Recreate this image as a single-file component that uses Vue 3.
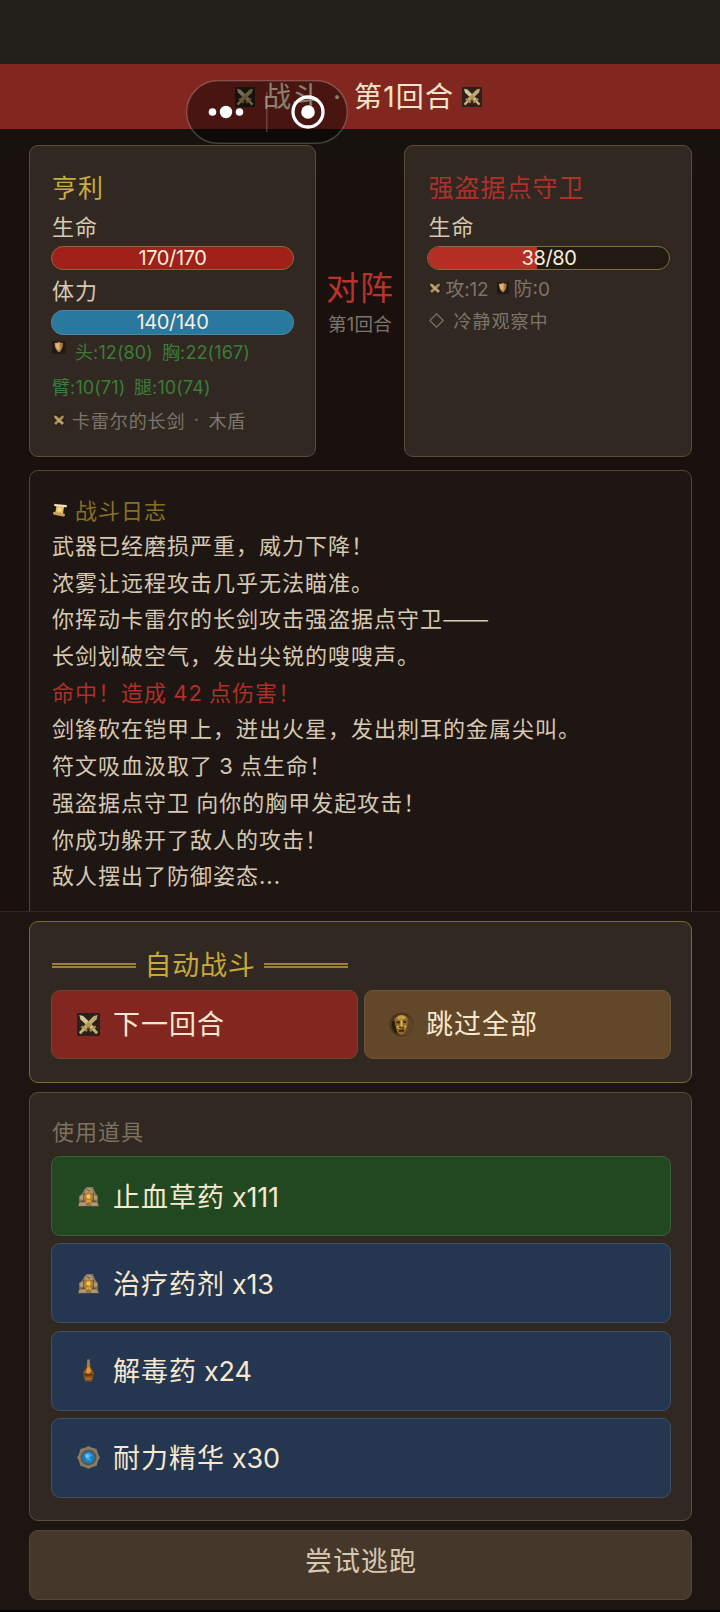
<script setup>
const logLines = [
  { text: '武器已经磨损严重，威力下降！' },
  { text: '浓雾让远程攻击几乎无法瞄准。' },
  { text: '你挥动卡雷尔的长剑攻击强盗据点守卫', dash: true },
  { text: '长剑划破空气，发出尖锐的嗖嗖声。' },
  { text: '命中！造成 42 点伤害！', hit: true },
  { text: '剑锋砍在铠甲上，迸出火星，发出刺耳的金属尖叫。' },
  { text: '符文吸血汲取了 3 点生命！' },
  { text: '强盗据点守卫 向你的胸甲发起攻击！' },
  { text: '你成功躲开了敌人的攻击！' },
  { text: '敌人摆出了防御姿态...' }
]
const items = [
  { name: '止血草药', count: 'x111', icon: 'i-relic', tone: 'green', num: 'narrow' },
  { name: '治疗药剂', count: 'x13', icon: 'i-relic', tone: 'blue', num: '' },
  { name: '解毒药', count: 'x24', icon: 'i-flask', tone: 'blue', num: '' },
  { name: '耐力精华', count: 'x30', icon: 'i-gem', tone: 'blue', num: '' }
]
</script>

<template>
  <div class="page">
    <svg class="defs" width="0" height="0">
      <symbol id="i-swords" viewBox="0 0 24 24">
        <rect width="24" height="24" rx="1" fill="#2b211a" />
        <path d="M2.500 2 L6.500 3 L18 14.500 L15 17.500 L3.500 6.500 Z" fill="#d6c397" />
        <path d="M21.500 2 L17.500 3 L6 14.500 L9 17.500 L20.500 6.500 Z" fill="#bda876" />
        <path d="M4.500 14 L10.500 19 M19.500 14 L13.500 19" stroke="#a88a4c" stroke-width="2.400" />
        <path d="M7.500 16.500 L3 21.200 M16.500 16.500 L21 21.200" stroke="#c9b07a" stroke-width="3" />
        <path d="M8 12.500 L12 9.500 L16 12.500 L12 16.500 Z" fill="#b29752" />
        <circle cx="12" cy="16" r="1.300" fill="#6e572d" />
      </symbol>
      <symbol id="i-swords-bare" viewBox="0 0 24 24">
        <rect width="24" height="24" rx="1" fill="#2b211a" fill-opacity=".7" />
        <path d="M2 3 L7 4 L22 18 L18 22 L3 8 Z" fill="#bfa06a" />
        <path d="M22 3 L17 4 L2 18 L6 22 L21 8 Z" fill="#a98a55" />
        <circle cx="12" cy="13" r="3" fill="#c9aa70" />
      </symbol>
      <symbol id="i-shield" viewBox="0 0 24 24">
        <rect width="24" height="24" fill="#211913" />
        <path d="M4 3 Q10 4 12 1 Q15 4 19 3 Q20 15 12 21 Q3 15 4 3Z" fill="#ae7d3c" />
        <path d="M5 4 Q10 5 13 3 L13 18 Q5 14 5 4Z" fill="#dcb878" />
      </symbol>
      <symbol id="i-scroll" viewBox="0 0 24 24">
        <path d="M6 4 L19 6 L17 19 L4 17 Z" fill="#e4bd68" />
        <path d="M9 8 L15 9 L13 15 L8 14Z" fill="#f6dc98" />
        <path d="M4 3.500 L22 5.500" stroke="#f2e0b6" stroke-width="4" stroke-linecap="round" />
        <path d="M2.500 17.500 L18 20.500" stroke="#c9a05a" stroke-width="5" stroke-linecap="round" />
      </symbol>
      <symbol id="i-mask" viewBox="0 0 24 24">
        <circle cx="12" cy="12" r="11.500" fill="#4b3520" />
        <circle cx="14" cy="13" r="9.300" fill="#5d4327" />
        <path d="M3 9 Q2 18 8 21 L7 8Z" fill="#281b10" />
        <path d="M5 7 Q12 -1 18 6 L17.500 15 Q15 22 12 22 Q8 22 6.500 15Z" fill="#916a28" />
        <path d="M7 5.500 Q12 1 16.500 5 L15 7 L9 7.500Z" fill="#c39c48" />
        <path d="M7 10 H11 M13.500 9.500 H16.500 M9.500 18 H14.500" stroke="#3a2511" stroke-width="1.800" />
        <path d="M12 8 V14 M8 13.500 L10 16 M16 13 L14 15.500" stroke="#e0bb61" stroke-width="1.800" />
        <path d="M9 15 L11 14.500 L13 16 L15 14" stroke="#5d3c17" stroke-width="1" fill="none" />
      </symbol>
      <symbol id="i-relic" viewBox="0 0 24 24">
        <path d="M7 4 L10 1 L17 1 L20 8 L23 12 L22.500 18 L24 23 H0 L1.500 18 L1 12 L5 8 Z" fill="#8c7558" />
        <path d="M9 3.500 L12 2 L16 3.500 L17 8 H8Z" fill="#a9987a" />
        <path d="M2 12 L7 9 L8 15 L3 16Z M16 9 L22 12 L21 16 L17 15Z M2 19 H9 V22.500 H1Z M15 19 H21 L23 22.500 H15Z" fill="#b39a72" />
        <path d="M6.500 8 V18 M17.500 8 V18 M3 17.500 H21 M10 4 L14 6" stroke="#60492f" stroke-width="1" />
        <ellipse cx="12" cy="13.500" rx="4.500" ry="6.500" fill="#bd7e20" />
        <circle cx="12" cy="12" r="2.500" fill="#f1c65c" />
        <path d="M9 18.500 L12 16.500 L15 18.500" stroke="#e5b14a" stroke-width="1.300" fill="none" />
      </symbol>
      <symbol id="i-flask" viewBox="0 0 24 24">
        <path d="M10.300 4 H13.700 L14.300 9 Q18.500 13 17.500 17 L15.500 23.500 H8.500 L6.500 17 Q5.500 13 9.700 9Z" fill="#8a511b" />
        <path d="M10.600 .5 H13.400 V8 H10.600Z" fill="#a08058" />
        <path d="M11 8 H13 L15 13 L12 15.500 L9 14Z" fill="#df9a38" />
        <path d="M7 16.500 H17" stroke="#5a3218" stroke-width="1.500" />
        <path d="M9 20.500 H15" stroke="#ad7644" stroke-width="1.500" />
      </symbol>
      <symbol id="i-gem" viewBox="0 0 24 24">
        <path d="M12 0 L15 1.500 L20.500 3 L22 8.500 L24 12 L22 15.500 L20.500 20.500 L15 22.500 L12 24 L9 22.500 L3.500 20.500 L2 15.500 L0 12 L2 8.500 L3.500 3 L9 1.500Z" fill="#877b68" />
        <circle cx="12" cy="12" r="8.300" fill="#5c564b" />
        <circle cx="12" cy="12" r="6.300" fill="#197ec0" />
        <path d="M8 9 L12 7 L16 10 L13 12 L15 16 L10 14Z" fill="#3ba9ee" />
        <circle cx="10.500" cy="10.500" r="1.800" fill="#77c8f8" />
      </symbol>
    </svg>

    <div class="status"></div>
    <header class="header">
      <svg class="ic20"><use href="#i-swords" /></svg>
      <span class="h-a">战斗</span><span class="h-dot">·</span><span class="h-b">第1回合</span>
      <svg class="ic20 last"><use href="#i-swords" /></svg>
    </header>

    <main class="arena">
      <section class="duel">
        <div class="card fighter">
          <div class="name gold">亨利</div>
          <div class="stat">生命</div>
          <div class="bar hp"><span class="num">170/170</span></div>
          <div class="stat second">体力</div>
          <div class="bar sp"><span class="num">140/140</span></div>
          <div class="armor">
            <svg class="ic13"><use href="#i-shield" /></svg><span class="a1">头:12(80)</span><span>胸:22(167)</span>
          </div>
          <div class="armor two"><span class="a3">臂:10(71)</span><span>腿:10(74)</span></div>
          <div class="gear"><svg class="ic12"><use href="#i-swords-bare" /></svg><span>卡雷尔的长剑</span><span class="gdot">·</span><span>木盾</span></div>
        </div>
        <div class="versus">
          <div class="vs">对阵</div>
          <div class="round">第1回合</div>
        </div>
        <div class="card fighter enemy">
          <div class="name red">强盗据点守卫</div>
          <div class="stat">生命</div>
          <div class="bar foe"><span class="fill"></span><span class="num">38/80</span></div>
          <div class="attrs">
            <svg class="ic12"><use href="#i-swords-bare" /></svg><span class="atk">攻:12</span>
            <svg class="ic12"><use href="#i-shield" /></svg><span class="def">防:0</span>
          </div>
          <div class="mood"><svg class="dia" viewBox="0 0 14 14"><path d="M7 .7 L13.300 7 L7 13.300 L.7 7Z" fill="none" stroke="#7d756a" /></svg><span>冷静观察中</span></div>
        </div>
      </section>

      <section class="log">
        <div class="log-title"><svg class="ic14"><use href="#i-scroll" /></svg><span>战斗日志</span></div>
        <div v-for="l in logLines" :key="l.text" class="line" :class="{ hit: l.hit }">{{ l.text }}<span v-if="l.dash" class="dash">——</span></div>
      </section>
    </main>

    <footer class="dock">
      <section class="card auto">
        <div class="auto-title"><span class="rule"></span><span class="auto-text">自动战斗</span><span class="rule"></span></div>
        <div class="actions">
          <button class="btn next"><svg class="ic23"><use href="#i-swords" /></svg><span>下一回合</span></button>
          <button class="btn skip"><svg class="ic25"><use href="#i-mask" /></svg><span>跳过全部</span></button>
        </div>
      </section>
      <section class="card bag">
        <div class="bag-title">使用道具</div>
        <button v-for="i in items" :key="i.name" class="btn item" :class="i.tone">
          <svg class="ic23" :class="i.icon"><use :href="'#' + i.icon" /></svg><span>{{ i.name }}</span><span class="count" :class="i.num">{{ i.count }}</span>
        </button>
      </section>
      <button class="btn flee">尝试逃跑</button>
    </footer>

    <svg class="capsule" width="162" height="64" viewBox="0 0 162 64">
      <rect x=".75" y=".75" width="160.500" height="62.500" rx="31.250" fill="#000" fill-opacity=".44" stroke="#fff" stroke-opacity=".2" stroke-width="1.500" />
      <circle cx="26.500" cy="32" r="3.800" fill="#fff" />
      <circle cx="40" cy="32" r="6.200" fill="#fff" />
      <circle cx="53.500" cy="32" r="3.800" fill="#fff" />
      <rect x="80" y="12" width="1.500" height="40" fill="#fff" fill-opacity=".2" />
      <circle cx="122" cy="32" r="15" fill="none" stroke="#fff" stroke-width="3.300" />
      <circle cx="122" cy="32" r="6.800" fill="#fff" />
    </svg>
  </div>
</template>

<style>
body { background: #1a110e; }
</style>

<style scoped>
* { box-sizing: border-box; }
.page {
  position: relative;
  width: 720px;
  height: 1612px;
  overflow: hidden;
  display: flex;
  flex-direction: column;
  background: #1a110e;
  font-family: Inter, "Noto Sans CJK SC", sans-serif;
  color: #d6c8b2;
  letter-spacing: 1px;
  white-space: nowrap;
  border-bottom: 2px solid #050303;
}
.defs { position: absolute; }
svg { flex: none; display: block; }
.status { height: 64px; flex: none; background: #231f1b; }
.header {
  height: 65px;
  flex: none;
  display: flex;
  align-items: center;
  padding: 0 0 0 235px;
  background: #81271f;
  color: #f7e4c8;
  font-size: 28px;
  line-height: 40px;
}
.ic20 { width: 20px; height: 20px; margin-top: 1px; }
.h-a { margin-left: 8px; }
.h-dot { width: 33px; text-align: center; }
.h-b { letter-spacing: 1.200px; }
.last { margin-left: 8px; }
.capsule { position: absolute; left: 186px; top: 80px; }

.arena {
  flex: none;
  height: 782px;
  padding: 16px 28px 0 29px;
  overflow: hidden;
  background: linear-gradient(#17120d, #1a110e 60px);
}
.duel { display: flex; height: 312px; }
.card {
  background: #312822;
  border: 1px solid #5a4d38;
  border-radius: 9px;
}
.fighter { width: 287px; height: 312px; padding: 23px 20px 0 21px; }
.enemy { width: 288px; padding-left: 22px; }
.versus { width: 89px; padding-top: 119px; text-align: center; }
.vs { color: #b8332b; font-size: 33px; line-height: 48px; }
.round { color: #7d756a; font-size: 18.500px; line-height: 25px; letter-spacing: .3px; }
.name { font-size: 25px; line-height: 38px; padding-left: 1px; }
.gold { color: #cbab3c; }
.red { color: #b0302a; }
.stat { font-size: 22px; line-height: 37px; height: 39px; padding: 2px 0 0 1px; }
.stat.second { height: 40px; padding-top: 3px; }
.bar {
  position: relative;
  height: 24px;
  width: 243px;
  border: 1px solid #8a6a38;
  border-radius: 12px;
  text-align: center;
}
.hp { background: #9f211a; }
.sp { background: #2878a0; height: 25px; border-color: #53859a; }
.foe { background: #211a13; border-color: #81713a; }
.fill { position: absolute; left: 0; top: 0; width: 45%; height: 100%; border-radius: 11px 0 0 11px; background: #b52f27; }
.num { position: relative; display: block; color: #fbeede; font-size: 20px; line-height: 22px; letter-spacing: -.4px; }
.armor { display: flex; height: 35px; line-height: 36px; font-size: 18px; letter-spacing: .1px; color: #3b7d38; padding-left: 1px; }
.armor svg { margin-top: 6px; }
.ic13 { width: 14px; height: 13px; }
.ic12 { width: 12px; height: 12px; }
.ic14 { width: 14px; height: 14px; }
.a1 { margin-left: 9px; width: 87px; }
.a3 { width: 82px; }
.gear { display: flex; align-items: center; height: 29px; padding-left: 2px; font-size: 18px; color: #7d756a; letter-spacing: .9px; }
.gear svg { margin: 1px 7px 0 0; }
.gdot { width: 23px; text-align: center; }
.attrs { display: flex; align-items: center; height: 35px; padding-left: 2px; font-size: 19px; color: #7d756a; }
.atk { margin: 0 9px 0 4px; letter-spacing: -.2px; }
.def { margin-left: 4px; letter-spacing: 0; }
.mood { display: flex; align-items: center; height: 30px; padding-left: 2px; font-size: 18px; color: #7d756a; }
.dia { width: 15px; height: 15px; margin-right: 9px; }

.log {
  margin-top: 13px;
  width: 663px;
  height: 480px;
  padding: 21px 22px;
  border: 1px solid #54472f;
  border-radius: 9px;
  background: #1e1612;
}
.log-title { display: flex; align-items: center; height: 36px; padding-bottom: 3px; font-size: 22px; color: #877026; padding-left: 1px; }
.log-title svg { margin-right: 8px; margin-top: 3px; }
.line { height: 36.700px; line-height: 36.700px; font-size: 22px; word-spacing: -1px; }
.hit { color: #af2f29; }
.dash { display: inline-block; font-family: "Noto Sans CJK SC", sans-serif; line-height: 30px; transform: scaleX(1.28); transform-origin: 0 50%; margin-left: -1px; }

.dock {
  flex: 1;
  border-top: 1px solid #35291f;
  background: #1c1512;
  padding: 9px 28px 0 29px;
  display: flex;
  flex-direction: column;
}
.auto { height: 162px; width: 663px; padding: 25px 20px 0 21px; border-color: #7c6930; }
.auto-title { display: flex; align-items: center; height: 37px; padding-left: 1px; color: #c8a83a; font-size: 27px; letter-spacing: .8px; }
.rule { width: 84px; height: 5px; border-top: 2px solid #9c8232; border-bottom: 2px solid #9c8232; }
.auto-text { width: 128px; text-align: center; padding-bottom: 5px; }
.actions { display: flex; gap: 6px; margin-top: 6px; }
.btn {
  display: flex;
  align-items: center;
  font: inherit;
  font-size: 27px;
  line-height: 38px;
  letter-spacing: 1px;
  color: #f7e8cf;
  border: 1px solid #5c4a35;
  border-radius: 9px;
  padding: 0 0 0 25px;
}
.actions .btn { width: 307px; height: 69px; }
.next { background: #81271f; border-color: #74422f; }
.skip { background: #624729; border-color: #6b5638; }
.btn span { margin-left: 13px; }
.skip span { margin-left: 12px; }
.ic23 { width: 23px; height: 23px; }
.ic25 { width: 25px; height: 25px; margin-left: -1px; }
.bag { width: 663px; height: 429px; margin-top: 9px; padding: 22px 20px 0 21px; display: flex; flex-direction: column; }
.bag-title { height: 34px; line-height: 34px; font-size: 22px; color: #7d7160; padding-left: 1px; margin-bottom: 7px; }
.item { width: 620px; height: 80px; margin-bottom: 7.300px; flex: none; padding-top: 3px; }
.item svg { margin-bottom: 3px; }
.item .count { margin-left: 7px; letter-spacing: -.2px; }
.btn .narrow { letter-spacing: -.2px; }
.green { background: #224821; border-color: #386134; }
.blue { background: #243650; border-color: #3f5064; }
.ic23.i-relic { width: 21px; height: 21px; margin-left: 1px; margin-right: 1px; }
.flee { width: 663px; height: 70px; margin-top: 9px; flex: none; justify-content: center; padding: 0 0 7px 1px; background: #45382a; border-color: #554735; color: #d8c8b0; }
</style>
